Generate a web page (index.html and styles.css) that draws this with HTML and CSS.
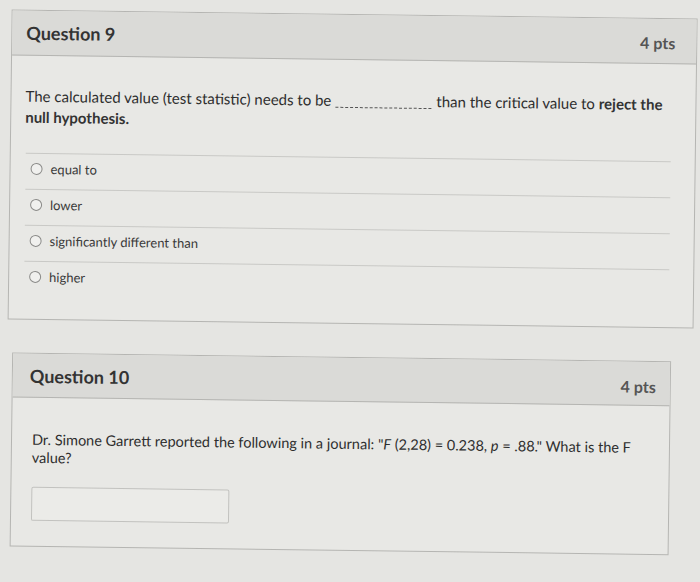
FILE: index.html
```html
<!DOCTYPE html>
<html>
<head>
<meta charset="utf-8">
<link rel="stylesheet" href="styles.css">
</head>
<body>
<div class="page">
  <div class="card q9">
    <div class="header">
      <span class="title">Question 9</span>
      <span class="pts">4 pts</span>
    </div>
    <div class="body">
      <p class="question">The calculated value (test statistic) needs to be<span class="blank"></span>than the critical value to <b>reject the null hypothesis.</b></p>
      <div class="answers">
        <div class="answer"><span class="radio"></span><span>equal to</span></div>
        <div class="answer"><span class="radio"></span><span>lower</span></div>
        <div class="answer"><span class="radio"></span><span>significantly different than</span></div>
        <div class="answer"><span class="radio"></span><span>higher</span></div>
      </div>
    </div>
  </div>
  <div class="card q10">
    <div class="header">
      <span class="title">Question 10</span>
      <span class="pts">4 pts</span>
    </div>
    <div class="body">
      <p class="question">Dr. Simone Garrett reported the following in a journal: "<i>F</i> (2,28) = 0.238, <i>p</i> = .88." What is the F value?</p>
      <div class="input"></div>
    </div>
  </div>
</div>
</body>
</html>
```

FILE: styles.css
```css
html, body {
  margin: 0;
  padding: 0;
  background: #e5e5e2;
}
body {
  width: 700px;
  height: 582px;
  overflow: hidden;
  font-family: Lato, "Open Sans", sans-serif;
  color: #2e2e2e;
}
.page {
  padding-top: 14px;
  transform: rotate(0.75deg);
  transform-origin: 350px 291px;
}
.card {
  border: 1px solid #b5b5b2;
  background: #e8e8e5;
  box-sizing: border-box;
}
.header {
  display: flex;
  justify-content: space-between;
  align-items: center;
  background: #dadad7;
  border-bottom: 1px solid #b5b5b2;
  box-sizing: border-box;
}
.title {
  font-weight: 700;
  font-size: 18px;
  color: #333;
}
.pts {
  font-size: 16px;
  font-weight: 700;
  color: #555;
  padding-top: 3px;
}
.question {
  margin: 0;
  font-size: 15px;
}
.question b {
  font-weight: 700;
  color: #333;
}
.blank {
  display: inline-block;
  width: 96px;
  margin: 0 5px 0 4px;
  border-bottom: 1px dashed #555;
  vertical-align: -2px;
}

/* Question 9 */
.q9 {
  margin-left: 8px;
  width: 686px;
}
.q9 .header {
  height: 45px;
  padding: 0 21px 0 14px;
}
.q9 .body {
  padding: 30px 24px 22px 14px;
}
.q9 .question {
  line-height: 21px;
  width: 640px;
}
.answers {
  margin-top: 25px;
  margin-left: 1px;
}
.answer {
  display: flex;
  align-items: center;
  border-top: 1px solid #c9c9c6;
  padding: 6px 0 11px 5px;
  height: 18px;
  font-size: 13px;
  color: #3a3a3a;
}
.radio {
  width: 10px;
  height: 10px;
  border: 1px solid #8a8a88;
  border-radius: 50%;
  background: #f0f0ee;
  margin-right: 8px;
  flex: none;
}

/* Question 10 */
.q10 {
  margin-top: 33px;
  margin-left: 13px;
  width: 659px;
}
.q10 .header {
  height: 44px;
  padding: 0 14px 0 17px;
}
.q10 .pts {
  padding-top: 6px;
}
.q10 .body {
  padding: 33px 20px 25px 20px;
}
.q10 .question {
  font-size: 14.5px;
  line-height: 18px;
  width: 612px;
}
.input {
  margin-top: 20px;
  width: 198px;
  height: 34px;
  border: 1px solid #c2c2bf;
  border-radius: 2px;
  background: #ebebe8;
  box-sizing: border-box;
}
```
